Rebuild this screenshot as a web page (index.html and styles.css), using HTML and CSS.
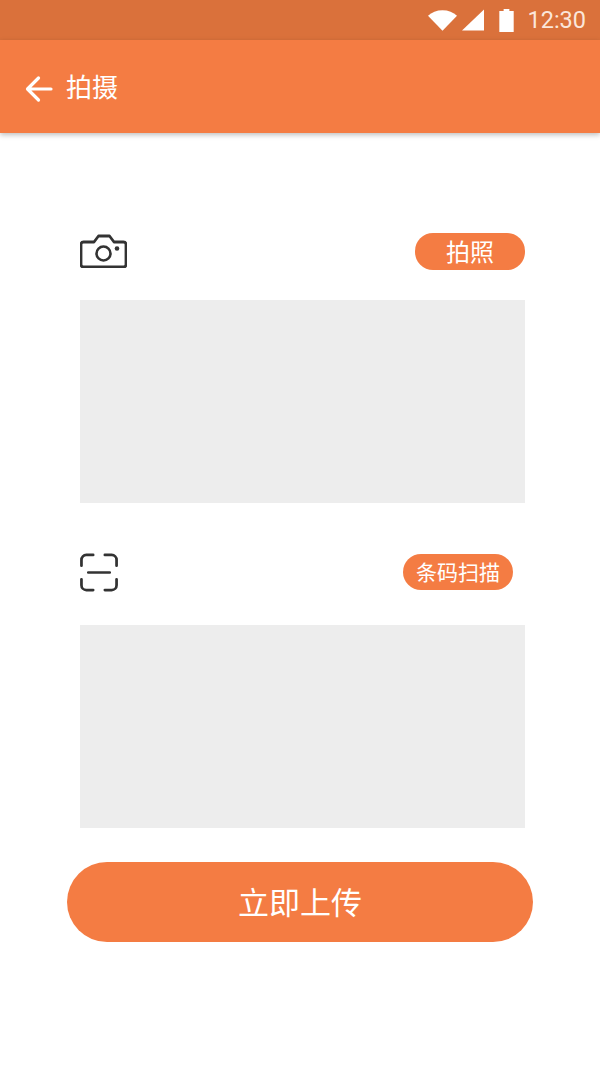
FILE: index.html
```html
<!DOCTYPE html>
<html lang="zh-CN">
<head>
  <meta charset="UTF-8" />
  <meta name="viewport" content="width=device-width, initial-scale=1.0"/>
  <title>拍摄</title>
  <link rel="stylesheet" href="styles.css">
</head>
<body>
  <!-- Status bar -->
  <div class="status-bar">
    <svg class="status-wifi" width="29" height="22" viewBox="0 0 30 22">
      <path d="M0 6.500C3.800 2.800 9 .8 15 .8s11.200 2 15 5.700L15 22z" fill="#fff"/>
    </svg>
    <svg class="status-signal" width="22" height="22" viewBox="0 0 23 22">
      <path d="M23 0v22H0z" fill="#fff"/>
    </svg>
    <svg class="status-battery" width="15" height="23" viewBox="0 0 15 24">
      <path d="M4.500 0h6v2H15v22H0V2h4.500z" fill="#fff"/>
    </svg>
    <span class="status-time">12:30</span>
  </div>

  <!-- App bar -->
  <header class="app-bar">
    <svg class="back-icon" width="28" height="28" viewBox="0 0 28 28">
      <path d="M26 14H3M13.500 3L2.500 14l11 11" fill="none" stroke="#fff" stroke-width="3.200" stroke-linecap="round" stroke-linejoin="round"/>
    </svg>
    <h1>拍摄</h1>
  </header>

  <main class="content">
    <div class="row row-photo">
      <svg class="camera-icon" width="47" height="34" viewBox="0 0 47 34">
        <path d="M3.500 8H14l4.500-6h11l4.500 6h9.500A2.500 2.500 0 0 1 46 10.500v20a2.500 2.500 0 0 1-2.500 2.500h-40A2.500 2.500 0 0 1 1 30.500v-20A2.500 2.500 0 0 1 3.500 8z" fill="none" stroke="#333" stroke-width="2.800" stroke-linejoin="round"/>
        <circle cx="23.500" cy="19.500" r="7" fill="none" stroke="#333" stroke-width="2.600"/>
        <circle cx="37" cy="14.500" r="2.300" fill="#333"/>
      </svg>
      <button class="pill pill-photo">拍照</button>
    </div>
    <div class="panel"></div>

    <div class="row row-scan">
      <svg width="39" height="39" viewBox="0 0 40 40">
        <path d="M1.500 13V7a5 5 0 0 1 5-5h7M25.500 2h7a5 5 0 0 1 5 5v6M1.500 27v6a5 5 0 0 0 5 5h7M25.500 38h7a5 5 0 0 0 5-5v-6M8.500 20h22" fill="none" stroke="#333" stroke-width="2.800" stroke-linecap="round"/>
      </svg>
      <button class="pill pill-scan">条码扫描</button>
    </div>
    <div class="panel"></div>

    <button class="upload">立即上传</button>
  </main>
</body>
</html>
```

FILE: styles.css
```css
body {
  margin: 0;
  background-color: #fff;
  font-family: Roboto, "Noto Sans CJK SC", sans-serif;
  color: #fff;
}

.status-bar {
  display: flex;
  align-items: center;
  justify-content: flex-end;
  height: 40px;
  padding-right: 14px;
  background-color: #da713b;
  box-sizing: border-box;
}

.status-wifi {
  margin-right: 5px;
}

.status-signal {
  margin-right: 15px;
}

.status-battery {
  margin-right: 13px;
}

.status-time {
  font-size: 23.500px;
  color: #fbe6da;
}

.back-icon {
  margin-top: 4px;
}

.app-bar {
  display: flex;
  align-items: center;
  height: 93px;
  padding-left: 25px;
  background-color: #f47c43;
  box-shadow: 0 2px 5px rgba(0, 0, 0, 0.25);
}

.app-bar h1 {
  margin: 0 0 3px 13px;
  font-size: 26px;
  font-weight: 400;
}

.content {
  display: flex;
  flex-direction: column;
  padding: 100px 75px 0 80px;
}

.row {
  display: flex;
  align-items: center;
  justify-content: space-between;
}

.row-photo {
  height: 37px;
  margin-bottom: 30px;
}

.camera-icon {
  margin-bottom: 1px;
}

.row-scan {
  height: 36px;
  margin-top: 51px;
  margin-bottom: 35px;
}

.pill {
  height: 100%;
  padding: 0 0 2px;
  border: none;
  border-radius: 18px;
  background-color: #f47c43;
  color: #fff;
  font-family: inherit;
}

.pill-photo {
  width: 110px;
  font-size: 24px;
}

.pill-scan {
  width: 110px;
  margin-right: 12px;
  font-size: 21px;
}

.panel {
  height: 203px;
  background-color: #ededed;
}

.upload {
  width: 466px;
  height: 80px;
  margin: 34px 0 0 -13px;
  padding: 0 0 4px;
  border: none;
  border-radius: 40px;
  background-color: #f47c43;
  color: #fff;
  font-family: inherit;
  font-size: 31px;
}
```
